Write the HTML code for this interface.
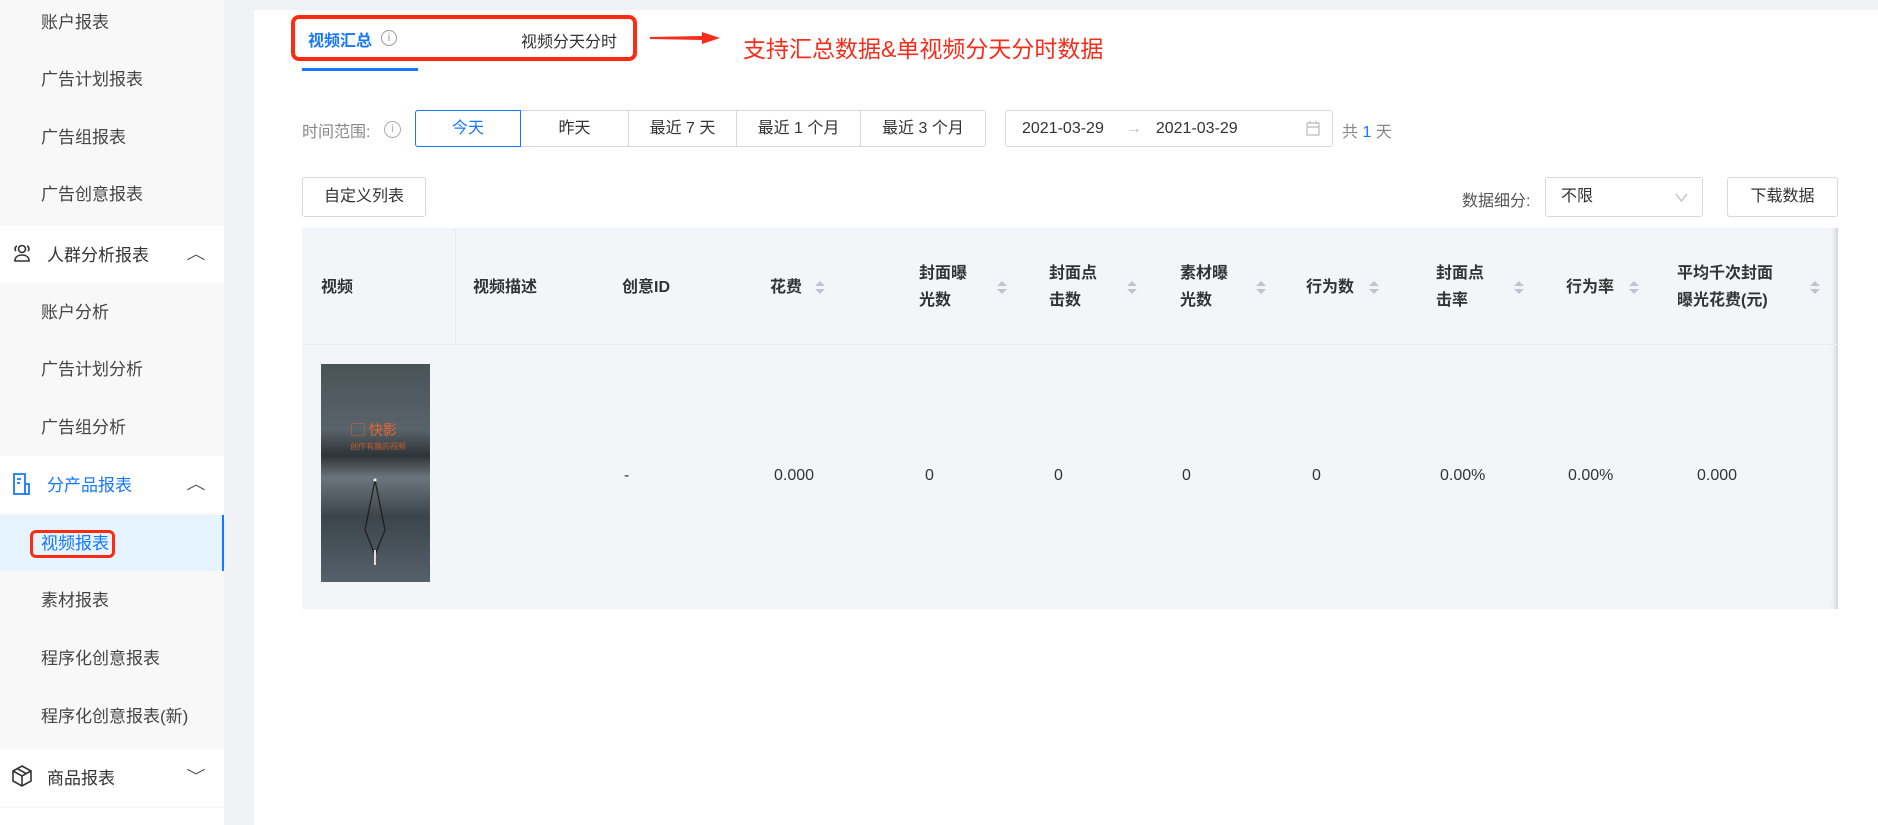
<!DOCTYPE html>
<html><head><meta charset="utf-8"><style>
*{margin:0;padding:0;box-sizing:border-box}
body{width:1878px;height:825px;overflow:hidden;background:#f0f2f5;font-family:"Liberation Sans","Noto Sans CJK SC",sans-serif;position:relative;color:#333}
.a{position:absolute;white-space:nowrap}
#side{position:absolute;left:0;top:0;width:224px;height:825px;background:#f8f8f9}
.si{position:absolute;left:41px;font-size:17px;color:#444;line-height:20px}
.sh{position:absolute;left:0;width:224px;height:57px;background:#fff}
.sh span{position:absolute;left:47px;top:15px;font-size:17px;color:#333}
.sh i{position:absolute;right:20px;top:14px;font-style:normal;font-size:16px;color:#555;transform:scaleX(1.2)}
#main{position:absolute;left:254px;top:10px;width:1624px;height:815px;background:#fff}
.btn{position:absolute;height:37px;border:1px solid #d9d9d9;font-size:16px;color:#333;text-align:center;line-height:35px;background:#fff}
.th{position:absolute;font-size:16px;font-weight:bold;color:#333;line-height:27px}
.so{position:absolute;width:10px;height:14px}
.so:before{content:"";position:absolute;left:0;top:0;border:5px solid transparent;border-bottom:5px solid #c0c4cc;border-top:0}
.so:after{content:"";position:absolute;left:0;top:8px;border:5px solid transparent;border-top:5px solid #c0c4cc;border-bottom:0}
.td{position:absolute;top:467px;font-size:16px;color:#333}
</style></head><body>
<div id="side">
<div class="si" style="top:13px">账户报表</div>
<div class="si" style="top:70px">广告计划报表</div>
<div class="si" style="top:128px">广告组报表</div>
<div class="si" style="top:185px">广告创意报表</div>
<div class="sh" style="top:226px"><svg class="a" style="left:11px;top:16px" width="22" height="22" viewBox="0 0 22 22" fill="none" stroke="#333" stroke-width="1.6"><circle cx="11" cy="7" r="3.5"/><path d="M4 19c0-4 3-6 7-6s7 2 7 6z"/><path d="M5 9a3 3 0 0 1 1-5M17 9a3 3 0 0 0-1-5"/></svg><span>人群分析报表</span><i>︿</i></div>
<div class="si" style="top:303px">账户分析</div>
<div class="si" style="top:360px">广告计划分析</div>
<div class="si" style="top:418px">广告组分析</div>
<div class="sh" style="top:456px"><svg class="a" style="left:12px;top:16px" width="20" height="24" viewBox="0 0 20 24" fill="none" stroke="#1677ff" stroke-width="1.8"><path d="M2 2h11v20H2z"/><path d="M13 12h4v10h-4M5 7h4M5 11h3"/></svg><span style="color:#1677ff">分产品报表</span><i>︿</i></div>
<div class="a" style="left:0;top:515px;width:224px;height:56px;background:#e6f4ff;border-right:2px solid #1677ff"></div>
<div class="a" style="left:30px;top:530px;width:85px;height:28px;border:3px solid #ff2a12;border-radius:6px"></div>
<div class="si" style="top:534px;color:#1677ff">视频报表</div>
<div class="si" style="top:591px">素材报表</div>
<div class="si" style="top:649px">程序化创意报表</div>
<div class="si" style="top:707px">程序化创意报表(新)</div>
<div class="sh" style="top:749px"><svg class="a" style="left:11px;top:15px" width="22" height="24" viewBox="0 0 22 24" fill="none" stroke="#333" stroke-width="1.6"><path d="M11 2l9 5v10l-9 5-9-5V7z"/><path d="M2 7l9 5 9-5M11 12v10M6 4.5l9 5"/></svg><span>商品报表</span><i>﹀</i></div>
<div class="a" style="left:0;top:808px;width:224px;height:17px;background:#fff"></div>
</div>
<div id="main"></div>
<div class="a" style="left:291px;top:15px;width:346px;height:46px;border:4px solid #ff2a12;border-radius:8px"></div>
<div class="a" style="left:308px;top:27px;font-size:16px;color:#1677ff;font-weight:bold">视频汇总</div>
<div class="a" style="left:381px;top:30px;width:16px;height:16px;border:1px solid #999;border-radius:50%;font-size:11px;color:#999;text-align:center;line-height:14px">i</div>
<div class="a" style="left:521px;top:28px;font-size:16px;color:#333">视频分天分时</div>
<div class="a" style="left:302px;top:68px;width:116px;height:3px;background:#1677ff"></div>
<svg class="a" style="left:650px;top:31px" width="70" height="14" viewBox="0 0 70 14"><path d="M0 6L52 5V1L70 7L52 13V9L0 8z" fill="#f52d1a"/></svg>
<div class="a" style="left:743px;top:30px;font-size:23px;color:#f52d1a">支持汇总数据&amp;单视频分天分时数据</div>
<div class="a" style="left:302px;top:118px;font-size:16px;color:#888">时间范围:</div>
<div class="a" style="left:384px;top:121px;width:17px;height:17px;border:1px solid #aaa;border-radius:50%;font-size:11px;color:#aaa;text-align:center;line-height:15px">i</div>
<div class="btn" style="left:520px;top:110px;width:109px">昨天</div>
<div class="btn" style="left:628px;top:110px;width:109px">最近 7 天</div>
<div class="btn" style="left:736px;top:110px;width:125px">最近 1 个月</div>
<div class="btn" style="left:860px;top:110px;width:126px;border-radius:0 3px 3px 0">最近 3 个月</div>
<div class="btn" style="left:415px;top:110px;width:106px;border-color:#1677ff;color:#1677ff;border-radius:3px 0 0 3px">今天</div>
<div class="btn" style="left:1005px;top:110px;width:328px;border-radius:3px;text-align:left;padding-left:16px">2021-03-29<span style="color:#bbb;margin:0 14px 0 22px">→</span>2021-03-29<svg style="position:absolute;right:12px;top:10px" width="14" height="15" viewBox="0 0 14 15" fill="none" stroke="#bbb" stroke-width="1.2"><rect x="1" y="2" width="12" height="12"/><path d="M1 6h12M4 0v3M10 0v3"/></svg></div>
<div class="a" style="left:1342px;top:118px;font-size:16px;color:#888">共 <span style="color:#1677ff">1</span> 天</div>
<div class="btn" style="left:302px;top:177px;width:124px;height:40px;line-height:38px;border-radius:3px">自定义列表</div>
<div class="a" style="left:1462px;top:187px;font-size:16px;color:#555">数据细分:</div>
<div class="btn" style="left:1545px;top:177px;width:158px;height:40px;line-height:38px;border-radius:3px;text-align:left;padding-left:15px">不限<svg style="position:absolute;right:14px;top:15px" width="13" height="9" viewBox="0 0 13 9" fill="none" stroke="#bbb" stroke-width="1.2"><path d="M1 1l5.5 7L12 1"/></svg></div>
<div class="btn" style="left:1727px;top:177px;width:111px;height:40px;line-height:38px;border-radius:3px">下载数据</div>
<div class="a" style="left:302px;top:228px;width:1536px;height:381px;background:#f3f6f9;box-shadow:inset -6px 0 6px -4px #c8ccd2"></div>
<div class="a" style="left:302px;top:344px;width:1536px;height:1px;background:#e8ebef"></div>
<div class="a" style="left:455px;top:228px;width:1px;height:116px;background:#e8ebef"></div>
<div class="th" style="left:321px;top:274px">视频</div>
<div class="th" style="left:473px;top:274px">视频描述</div>
<div class="th" style="left:622px;top:274px">创意ID</div>
<div class="th" style="left:770px;top:274px">花费</div><div class="so" style="left:815px;top:281px"></div>
<div class="th" style="left:919px;top:260px">封面曝<br>光数</div><div class="so" style="left:997px;top:281px"></div>
<div class="th" style="left:1049px;top:260px">封面点<br>击数</div><div class="so" style="left:1127px;top:281px"></div>
<div class="th" style="left:1180px;top:260px">素材曝<br>光数</div><div class="so" style="left:1256px;top:281px"></div>
<div class="th" style="left:1306px;top:274px">行为数</div><div class="so" style="left:1369px;top:281px"></div>
<div class="th" style="left:1436px;top:260px">封面点<br>击率</div><div class="so" style="left:1514px;top:281px"></div>
<div class="th" style="left:1566px;top:274px">行为率</div><div class="so" style="left:1629px;top:281px"></div>
<div class="th" style="left:1677px;top:260px">平均千次封面<br>曝光花费(元)</div><div class="so" style="left:1810px;top:281px"></div>
<div class="a" style="left:321px;top:364px;width:109px;height:218px;background:linear-gradient(180deg,#4a5358 0%,#59636a 30%,#2e3438 42%,#6b757c 52%,#3c454b 70%,#55616a 100%)"></div>
<div class="a" style="left:351px;top:420px;font-size:14px;color:#e8642c">▢ 快影</div>
<div class="a" style="left:350px;top:441px;font-size:8px;color:#c05a30">创作有趣的视频</div>
<svg class="a" style="left:360px;top:470px" width="30" height="100"><path d="M15 10L5 60L15 85L25 60Z" fill="none" stroke="#1a1d20" stroke-width="1.2"/><circle cx="15" cy="10" r="1.5" fill="#fff"/><path d="M15 80v15" stroke="#ddd" stroke-width="2"/></svg>
<div class="td" style="left:624px">-</div>
<div class="td" style="left:774px">0.000</div>
<div class="td" style="left:925px">0</div>
<div class="td" style="left:1054px">0</div>
<div class="td" style="left:1182px">0</div>
<div class="td" style="left:1312px">0</div>
<div class="td" style="left:1440px">0.00%</div>
<div class="td" style="left:1568px">0.00%</div>
<div class="td" style="left:1697px">0.000</div>
</body></html>
